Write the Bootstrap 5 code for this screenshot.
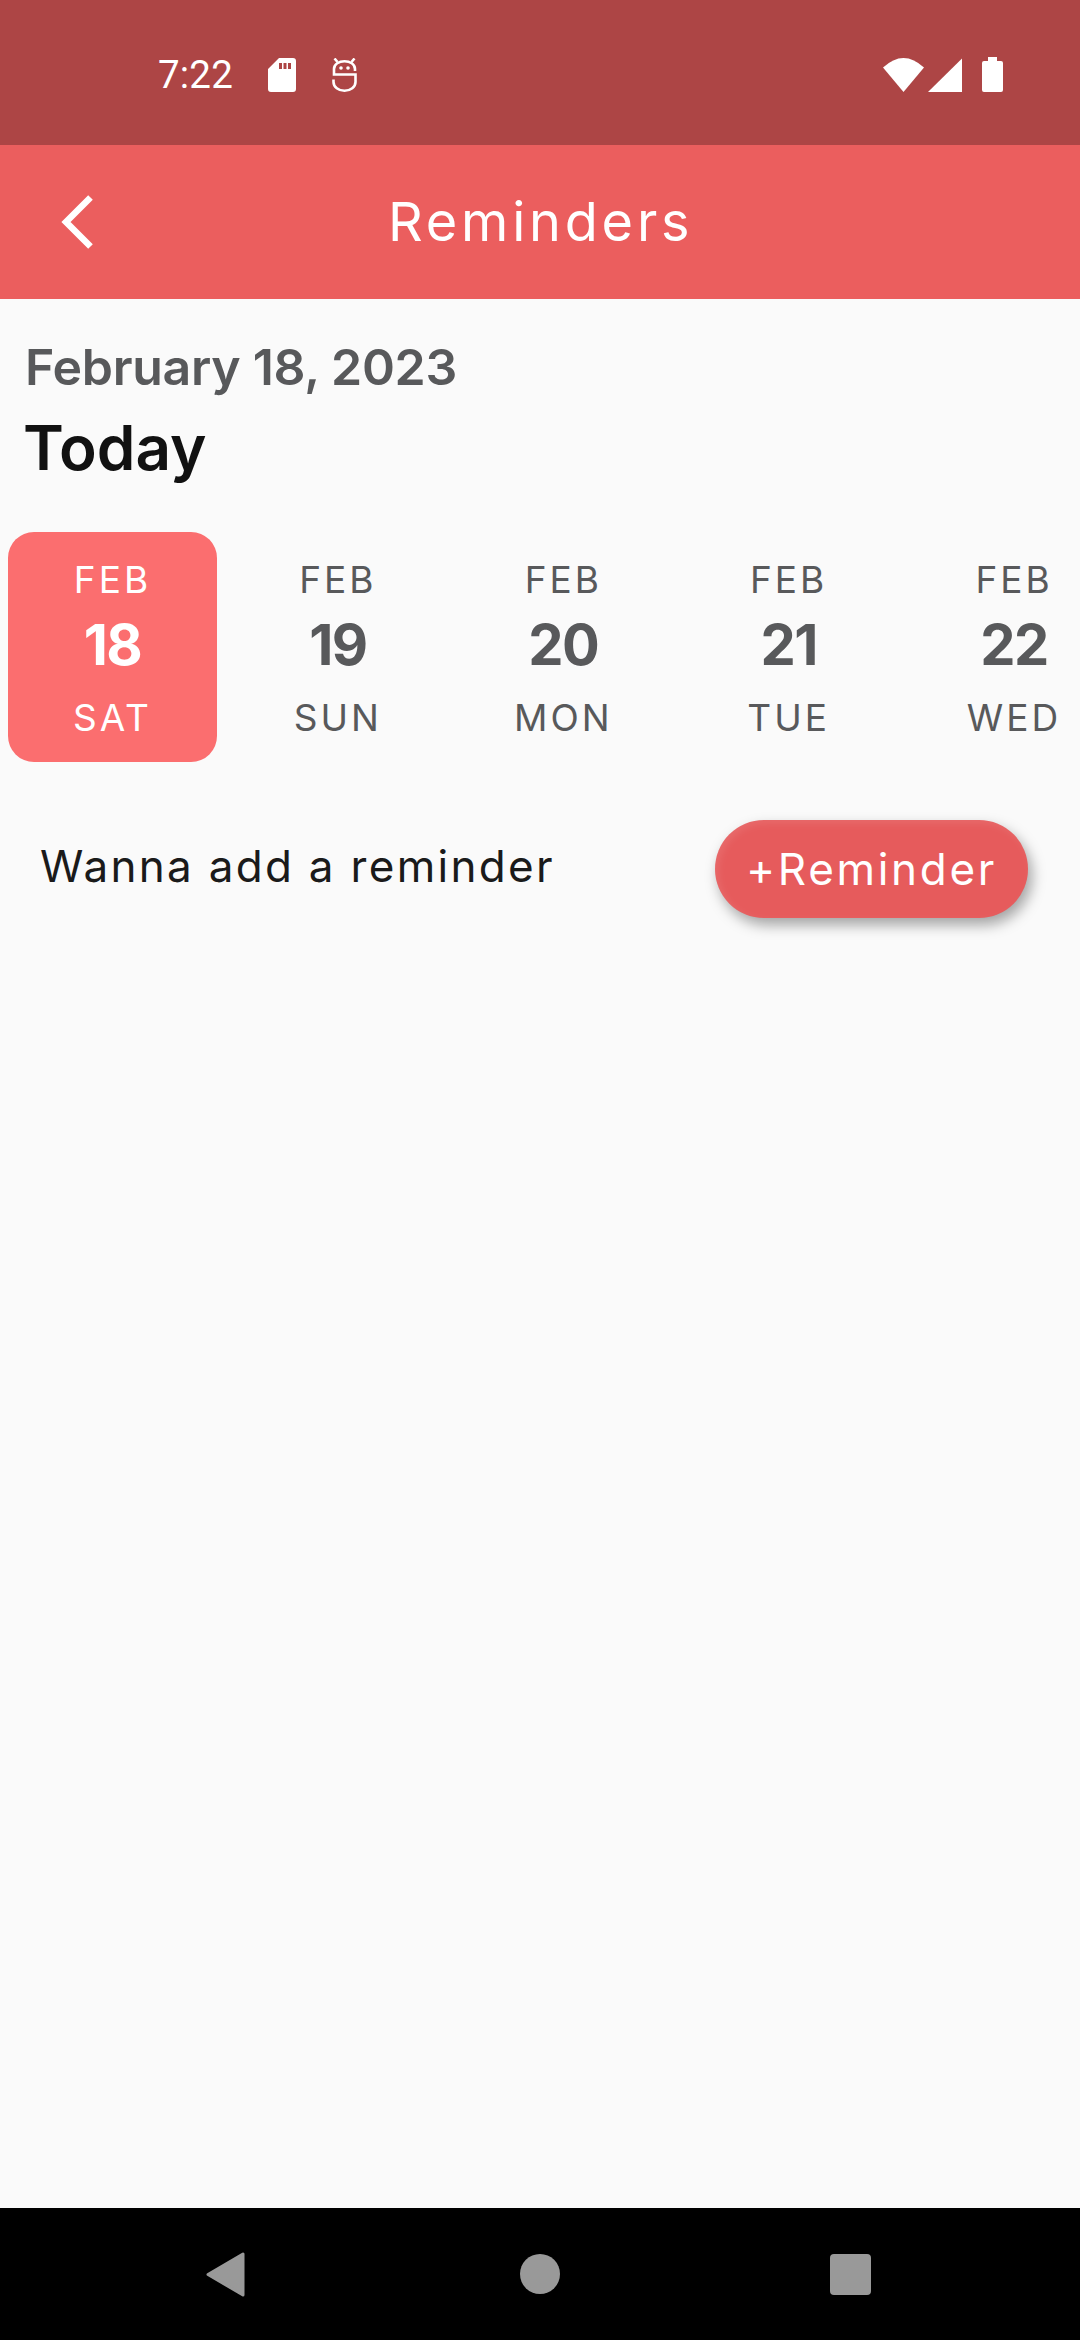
<!DOCTYPE html>
<html lang="en">
<head>
  <meta charset="UTF-8">
  <meta name="viewport" content="width=device-width, initial-scale=1">
  <title>Reminders</title>
  <link href="https://cdn.jsdelivr.net/npm/bootstrap@5.3.2/dist/css/bootstrap.min.css" rel="stylesheet">
  <style>
    body { width: 1080px; height: 2340px; background: #fafafa; font-family: Inter, "Open Sans", sans-serif; overflow: hidden; }
    .status-strip { height: 145px; background: #ad4545; padding: 58px 77px 0 158px; }
    .status-time { font-family: Roboto, sans-serif; font-size: 38.5px; line-height: 34px; width: 74px; letter-spacing: .2px; }
    .sd-icon { margin-left: 36px; }
    .robot-icon { margin-left: 36px; }
    .signal-icon { margin-left: 4px; }
    .battery-icon { margin-left: 20px; margin-top: -1px; }
    .app-strip { height: 154px; background: #eb5e5e; }
    .back-btn { left: 60px; top: 50px; }
    .app-title { font-size: 54px; font-weight: 400; line-height: 154px; padding-left: 388px; letter-spacing: 3.8px; }
    .date-line { font-size: 50px; font-weight: 600; color: #58595b; line-height: 60px; padding: 38px 0 0 25px; letter-spacing: -.3px; }
    .today-line { font-size: 62px; font-weight: 600; color: #111; line-height: 70px; padding: 16px 0 0 23px; }
    .day-row { padding: 49px 0 0 8px; gap: 16.4px; overflow: hidden; }
    .day-cell { flex: 0 0 209px; height: 230px; border-radius: 26px; color: #58595b; }
    .day-cell.picked { background: #fb6e6f; color: #fff; }
    .day-mon, .day-week { font-size: 37px; line-height: 44px; letter-spacing: 3px; }
    .day-mon { padding-top: 26px; }
    .day-num { font-size: 56px; font-weight: 700; line-height: 66px; letter-spacing: -1.5px; padding-top: 10px; }
    .day-week { padding-top: 18px; }
    .add-row { padding: 58px 52px 0 40px; }
    .add-text { font-size: 44px; color: #1a1a1a; letter-spacing: 2.3px; padding-bottom: 6px; }
    .add-btn { width: 313px; height: 98px; background: #e65b5c; color: #fff; font-size: 44px; line-height: 98px; padding: 0; border: 0; letter-spacing: 2.7px;
      box-shadow: 4px 7px 14px rgba(0,0,0,.35), inset 3px 3px 8px rgba(255,255,255,.1); }
    .nav-strip { height: 132px; background: #000; }
    .nav-back { left: 206px; top: 44px; }
    .nav-home { left: 520px; top: 46px; }
    .nav-recent { left: 830px; top: 46px; }
  </style>
</head>
<body class="d-flex flex-column">
  <div class="status-strip d-flex align-items-start text-white">
    <span class="status-time">7:22</span>
    <svg class="sd-icon" width="28" height="34" viewBox="0 0 28 34"><path fill="#fff" fill-rule="evenodd" d="M11 0H25a3 3 0 0 1 3 3V31a3 3 0 0 1-3 3H3a3 3 0 0 1-3-3V11ZM11 5V11H14V5ZM15.5 5V11H18.5V5ZM20 5V11H23V5Z"/></svg>
    <svg class="robot-icon" width="25" height="34" viewBox="0 0 25 34"><g fill="none" stroke="#fff" stroke-width="2.6"><path d="M23 13V11C23 6 18 3.200 12.500 3.200C7 3.200 2 6 2 11V16.500H23.500V24C23.500 29 18.500 32.700 12.500 32.700C6.500 32.700 1.500 29 1.500 24V21.500"/><path d="M2.500 .5L5.500 4M22.500 .5L19.500 4"/></g><circle cx="9" cy="10" r="1.800" fill="#fff"/><circle cx="16" cy="10" r="1.800" fill="#fff"/></svg>
    <div class="ms-auto d-flex align-items-start">
      <svg width="41" height="34" viewBox="0 0 41 34"><path fill="#fff" d="M0 9.600Q20.500 -9.600 41 9.600L20.500 34Z"/></svg>
      <svg class="signal-icon" width="34" height="34" viewBox="0 0 34 34"><path fill="#fff" d="M34 .5V34H0Z"/></svg>
      <svg class="battery-icon" width="21" height="35" viewBox="0 0 21 35"><path fill="#fff" d="M6 0H15V4H19a2 2 0 0 1 2 2V33a2 2 0 0 1-2 2H2a2 2 0 0 1-2-2V6a2 2 0 0 1 2-2H6Z"/></svg>
    </div>
  </div>

  <div class="app-strip position-relative text-white">
    <svg class="back-btn position-absolute" width="33" height="54" viewBox="0 0 33 54"><path fill="none" stroke="#fff" stroke-width="6.500" d="M30.500 2.500L6 27L30.500 51.500"/></svg>
    <div class="app-title">Reminders</div>
  </div>

  <main class="flex-grow-1">
    <div class="date-line">February 18, 2023</div>
    <div class="today-line">Today</div>
    <div class="day-row d-flex">
      <div class="day-cell picked text-center"><div class="day-mon">FEB</div><div class="day-num">18</div><div class="day-week">SAT</div></div>
      <div class="day-cell text-center"><div class="day-mon">FEB</div><div class="day-num">19</div><div class="day-week">SUN</div></div>
      <div class="day-cell text-center"><div class="day-mon">FEB</div><div class="day-num">20</div><div class="day-week">MON</div></div>
      <div class="day-cell text-center"><div class="day-mon">FEB</div><div class="day-num">21</div><div class="day-week">TUE</div></div>
      <div class="day-cell text-center"><div class="day-mon">FEB</div><div class="day-num">22</div><div class="day-week">WED</div></div>
    </div>
    <div class="add-row d-flex justify-content-between align-items-center">
      <span class="add-text">Wanna add a reminder</span>
      <button type="button" class="btn add-btn rounded-pill">+Reminder</button>
    </div>
  </main>

  <div class="nav-strip position-relative">
    <svg class="nav-back position-absolute" width="39" height="45" viewBox="0 0 39 45"><path fill="#999" stroke="#999" stroke-width="3" stroke-linejoin="round" d="M37 2V43L2 22.500Z"/></svg>
    <svg class="nav-home position-absolute" width="40" height="40" viewBox="0 0 40 40"><circle cx="20" cy="20" r="20" fill="#999"/></svg>
    <svg class="nav-recent position-absolute" width="41" height="41" viewBox="0 0 41 41"><rect width="41" height="41" rx="4" fill="#999"/></svg>
  </div>

  <script src="https://cdn.jsdelivr.net/npm/bootstrap@5.3.2/dist/js/bootstrap.bundle.min.js"></script>
</body>
</html>
